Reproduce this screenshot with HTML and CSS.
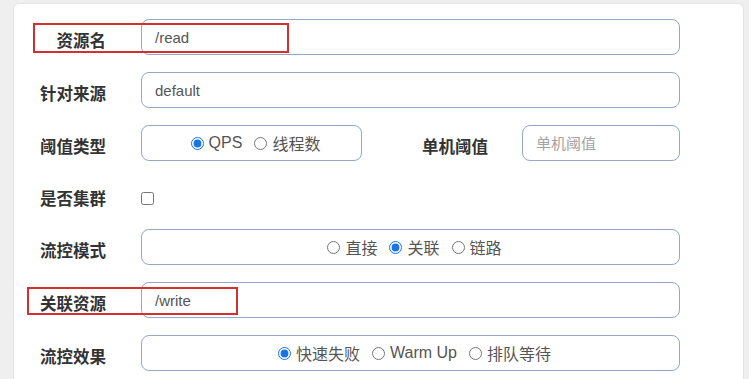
FILE: index.html
```html
<!DOCTYPE html>
<html lang="zh-CN">
<head>
  <meta charset="UTF-8">
  <title>新增流控规则</title>
  <meta name="viewport" content="width=device-width, initial-scale=1">
  <link rel="stylesheet" href="styles.css">
</head>
<body>
  <div class="panel">
    <form class="rule-form">
      <div class="row">
        <label class="lbl">资源名</label>
        <input class="field" type="text" value="/read">
      </div>

      <div class="row">
        <label class="lbl">针对来源</label>
        <input class="field" type="text" value="default">
      </div>

      <div class="row">
        <label class="lbl">阈值类型</label>
        <div class="choice choice-sm">
          <label class="opt"><input type="radio" name="grade" checked>QPS</label>
          <label class="opt"><input type="radio" name="grade">线程数</label>
        </div>
        <label class="lbl lbl-mid">单机阈值</label>
        <input class="field field-sm" type="text" placeholder="单机阈值">
      </div>

      <div class="row row-check">
        <label class="lbl">是否集群</label>
        <input class="check" type="checkbox">
      </div>

      <div class="row">
        <label class="lbl">流控模式</label>
        <div class="choice">
          <label class="opt"><input type="radio" name="strategy">直接</label>
          <label class="opt"><input type="radio" name="strategy" checked>关联</label>
          <label class="opt"><input type="radio" name="strategy">链路</label>
        </div>
      </div>

      <div class="row">
        <label class="lbl">关联资源</label>
        <input class="field" type="text" value="/write">
      </div>

      <div class="row row-last">
        <label class="lbl">流控效果</label>
        <div class="choice">
          <label class="opt"><input type="radio" name="behavior" checked>快速失败</label>
          <label class="opt"><input type="radio" name="behavior">Warm Up</label>
          <label class="opt"><input type="radio" name="behavior">排队等待</label>
        </div>
      </div>
    </form>

    <!-- annotation marks -->
    <div class="mark mark-name"></div>
    <div class="mark mark-ref"></div>
  </div>
</body>
</html>
```

FILE: styles.css
```css
body, html {
  margin: 0;
  padding: 0;
  background: #efefef;
  font-family: "Liberation Sans", "Noto Sans CJK SC", sans-serif;
}

body {
  padding: 3px 5px 0 13px;
  height: 379px;
  box-sizing: border-box;
  overflow: hidden;
}

.panel {
  position: relative;
  width: 731px;
  height: 376px;
  box-sizing: border-box;
  background: #fff;
  border: 1px solid #e3e3e3;
  border-bottom: none;
  border-radius: 6px 6px 0 0;
  padding-top: 15px;
}

.rule-form {
  margin: 0;
}

.row {
  display: flex;
  align-items: center;
  height: 36px;
  margin-bottom: 17px;
}

.row-check {
  height: 34px;
}

.row-last {
  margin-bottom: 0;
}

.lbl {
  width: 92px;
  flex: none;
  margin-right: 35px;
  text-align: right;
  font-size: 16.5px;
  font-weight: bold;
  color: #333;
  padding-top: 5px;
}

.lbl-mid {
  width: 126px;
  margin-right: 34px;
}

.field {
  width: 539px;
  height: 36px;
  box-sizing: border-box;
  border: 1px solid #93a8c5;
  border-radius: 8px;
  padding: 0 13px;
  font-family: inherit;
  font-size: 15px;
  color: #555;
  outline: none;
}

.field-sm {
  width: 158px;
}

.field::placeholder {
  color: #a3a3a3;
}

.choice {
  width: 539px;
  height: 36px;
  box-sizing: border-box;
  border: 1px solid #93a8c5;
  border-radius: 8px;
  display: flex;
  align-items: center;
  justify-content: center;
  gap: 12px;
  padding-left: 8px;
}

.choice-sm {
  width: 221px;
  flex: none;
}

.opt {
  display: flex;
  align-items: center;
  font-size: 16px;
  color: #555;
}

.opt input {
  width: 13px;
  height: 13px;
  margin: 0 5px 0 0;
  accent-color: #1a73e8;
}

.check {
  width: 13px;
  height: 13px;
  margin: 6px 0 0 0;
}

.mark {
  position: absolute;
  box-sizing: border-box;
  border: 2px solid #d3302f;
}

.mark-name {
  left: 19px;
  top: 19px;
  width: 256px;
  height: 30px;
}

.mark-ref {
  left: 13px;
  top: 283px;
  width: 211px;
  height: 28px;
}
```
